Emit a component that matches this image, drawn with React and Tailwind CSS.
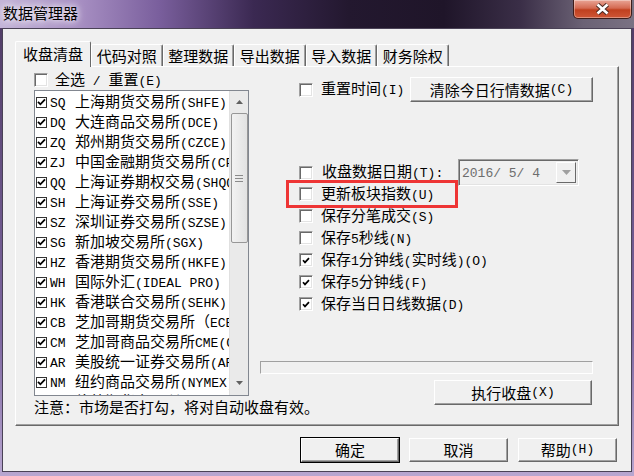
import React from 'react';

const ASCII = /([\x20-\x7e]+)/;

// SimSun-like mixing: half-width ascii in a mono face, CJK in Noto
function T({ s }) {
  return s.split(ASCII).map((p, i) =>
    i % 2 === 1 ? (
      <span key={i} className="font-['Liberation_Mono',monospace] text-[13px] whitespace-pre">{p}</span>
    ) : (
      p
    )
  );
}

function Check({ on }) {
  return (
    <span className="w-[14px] h-[14px] shrink-0 bg-white border border-t-[#a0a0a0] border-l-[#a0a0a0] border-r-white border-b-white shadow-[inset_1px_1px_0_#696969,inset_-1px_-1px_0_#e3e3e3] flex items-center justify-center">
      {on && (
        <svg width="8" height="7" viewBox="0 0 8 7">
          <path d="M1 3.2 L3 5.4 L7 1.2" stroke="#000" strokeWidth="1.7" fill="none" />
        </svg>
      )}
    </span>
  );
}

function Btn({ children, className = '' }) {
  return (
    <div className={`flex items-center justify-center bg-[#f0f0f0] border border-t-white border-l-white border-r-[#696969] border-b-[#696969] shadow-[inset_-1px_-1px_0_#a0a0a0] leading-[20px] ${className}`}>
      {children}
    </div>
  );
}

const markets = [
  ['SQ', '上海期货交易所(SHFE)'],
  ['DQ', '大连商品交易所(DCE)'],
  ['ZQ', '郑州期货交易所(CZCE)'],
  ['ZJ', '中国金融期货交易所(CFFEX)'],
  ['QQ', '上海证券期权交易(SHQQ)'],
  ['SH', '上海证券交易所(SSE)'],
  ['SZ', '深圳证券交易所(SZSE)'],
  ['SG', '新加坡交易所(SGX)'],
  ['HZ', '香港期货交易所(HKFE)'],
  ['WH', '国际外汇(IDEAL PRO)'],
  ['HK', '香港联合交易所(SEHK)'],
  ['CB', '芝加哥期货交易所（ECBOT)'],
  ['CM', '芝加哥商品交易所CME(GLOBEX)'],
  ['AR', '美股统一证券交易所(ARCA)'],
  ['NM', '纽约商品交易所(NYMEX)'],
  ['LE', '伦敦期货交易所(LIFFE)'],
];

const tabs = ['代码对照', '整理数据', '导出数据', '导入数据', '财务除权'];

const options = [
  ['更新板块指数(U)', false],
  ['保存分笔成交(S)', false],
  ['保存5秒线(N)', false],
  ['保存1分钟线(实时线)(O)', true],
  ['保存5分钟线(F)', true],
  ['保存当日日线数据(D)', true],
];

export default function App() {
  return (
    <div className="w-[634px] h-[476px] overflow-hidden flex flex-col bg-[linear-gradient(to_bottom,#4e3a63,#7d66a0_70%,#b8a6d0)] font-['Noto_Sans_CJK_SC',sans-serif] text-[15px] text-black">
      {/* title bar */}
      <div className="h-[28px] shrink-0 flex items-start justify-between bg-[linear-gradient(to_right,#c4b5d8_0%,#a991c4_12%,#7a5f9d_25%,#3b2952_40%,#23182f_55%,#1f1529_70%,#3a2e47_82%,#6b6275_92%,#7a7283_100%)]">
        <div className="pl-[3px] pt-[3px] leading-[20px] [text-shadow:0_0_6px_#fff,0_0_10px_rgba(255,255,255,0.8)]">数据管理器</div>
        <div className="mr-[2px] w-[59px] h-[19px] rounded-b-[5px] border border-t-0 border-[#3d1d1a] bg-[linear-gradient(to_bottom,#e9a596,#d46a52_45%,#c0401f_55%,#cf5636)] shadow-[inset_0_0_0_1px_rgba(255,255,255,0.35)] flex items-center justify-center">
          <svg width="15" height="12" viewBox="0 0 15 12">
            <path d="M2.5 1.5 L12.5 10.5 M12.5 1.5 L2.5 10.5" stroke="#4a2a24" strokeWidth="4.6" />
            <path d="M2.5 1.5 L12.5 10.5 M12.5 1.5 L2.5 10.5" stroke="#fff" strokeWidth="2.6" />
          </svg>
        </div>
      </div>

      <div className="flex-1 min-h-0 px-[2px] pb-[4px] flex">
        <div className="flex-1 bg-[#f0f0f0] border border-[#4a4256] flex flex-col">
          {/* tab strip */}
          <div className="ml-[12px] mt-[12px] h-[25px] flex items-end">
            <div className="relative z-10 -mb-px w-[76px] h-[26px] bg-[#f0f0f0] border-l border-t border-r border-l-white border-t-white border-r-[#696969] rounded-t-[2px] flex items-center justify-center pb-[2px] leading-[20px]">
              收盘清盘
            </div>
            {tabs.map((t) => (
              <div key={t} className="w-[71.5px] h-[22px] border-l border-t border-r border-l-white border-t-white border-r-[#696969] rounded-t-[2px] shadow-[inset_-1px_0_0_#a0a0a0] flex items-center justify-center leading-[20px]">
                {t}
              </div>
            ))}
          </div>

          {/* tab panel */}
          <div className="ml-[12px] w-[604px] h-[360px] border border-t-white border-l-white border-r-[#696969] border-b-[#696969] shadow-[inset_-1px_-1px_0_#a0a0a0] flex">
            {/* left column */}
            <div className="ml-[18px] w-[215px] pt-[6px] flex flex-col">
              <div className="h-[14px] flex items-center gap-[7px] leading-[20px] whitespace-nowrap">
                <Check />
                <span><T s="全选 / 重置(E)" /></span>
              </div>
              <div className="mt-[3px] h-[306px] border border-[#828790] bg-white flex">
                <div className="flex-1 min-w-0 overflow-hidden pt-[1px]">
                  {markets.map(([c, n]) => (
                    <div key={c} className="h-[20px] flex items-center whitespace-nowrap leading-[20px]">
                      <span className="ml-px w-[11px] h-[11px] shrink-0 border border-[#333] bg-white flex items-center justify-center">
                        <svg width="9" height="8" viewBox="0 0 9 8">
                          <path d="M1 3.8 L3.4 6.3 L8 1.3" stroke="#000" strokeWidth="1.8" fill="none" />
                        </svg>
                      </span>
                      <span className="ml-[3px] w-[25px] shrink-0"><T s={c} /></span>
                      <span><T s={n} /></span>
                    </div>
                  ))}
                </div>
                {/* scrollbar */}
                <div className="w-[19px] shrink-0 bg-[#eaeaea] border-l border-[#e0e0e0] flex flex-col items-center">
                  <div className="h-[22px] flex items-center justify-center">
                    <svg width="7" height="4" viewBox="0 0 7 4"><path d="M0 4 L3.5 0 L7 4 Z" fill="#606060" /></svg>
                  </div>
                  <div className="w-[17px] h-[130px] rounded-[2px] border border-[#979797] bg-[linear-gradient(to_right,#f2f2f2,#e2e2e2)] flex flex-col items-center justify-center gap-[2px]">
                    <span className="w-[8px] h-px bg-[#8a8a8a]" />
                    <span className="w-[8px] h-px bg-[#8a8a8a]" />
                    <span className="w-[8px] h-px bg-[#8a8a8a]" />
                  </div>
                  <div className="flex-1" />
                  <div className="h-[24px] flex items-center justify-center">
                    <svg width="7" height="4" viewBox="0 0 7 4"><path d="M0 0 L3.5 4 L7 0 Z" fill="#606060" /></svg>
                  </div>
                </div>
              </div>
              <div className="mt-px leading-[20px] whitespace-nowrap">注意：市场是否打勾，将对自动收盘有效。</div>
            </div>

            {/* right column */}
            <div className="relative ml-[11px] w-[358px] flex flex-col">
              <div className="mt-[10px] h-[25px] flex items-center pl-[39px] leading-[20px]">
                <Check />
                <span className="ml-[8px]"><T s="重置时间(I)" /></span>
                <Btn className="ml-auto mr-[25px] w-[183px] h-[25px]"><T s="清除今日行情数据(C)" /></Btn>
              </div>

              <div className="mt-[57px] h-[27px] flex items-center pl-[39px] leading-[20px]">
                <Check />
                <span className="ml-[9px] whitespace-nowrap"><T s="收盘数据日期(T):" /></span>
                <div className="ml-auto mr-[39px] w-[121px] h-[27px] bg-[#f0f0f0] border border-t-[#a0a0a0] border-l-[#a0a0a0] border-r-white border-b-white shadow-[inset_1px_1px_0_#696969,inset_-1px_-1px_0_#e3e3e3] flex items-center">
                  <span className="ml-[3px] text-[#6d6d6d]"><T s="2016/ 5/ 4" /></span>
                  <div className="ml-auto mr-[2px] w-[20px] h-[21px] bg-[#f0f0f0] border border-t-white border-l-white border-r-[#696969] border-b-[#696969] flex items-center justify-center">
                    <svg width="9" height="5" viewBox="0 0 9 5"><path d="M0 0 L4.5 5 L9 0 Z" fill="#a0a0a0" /></svg>
                  </div>
                </div>
              </div>

              <div className="-mt-[3px] flex flex-col">
                {options.map(([label, on]) => (
                  <div key={label} className="h-[22px] flex items-center pl-[39px] leading-[20px] whitespace-nowrap">
                    <Check on={on} />
                    <span className="ml-[8px]"><T s={label} /></span>
                  </div>
                ))}
              </div>

              <div className="mt-[46px] w-[333px] h-[13px] bg-[#f0f0f0] border border-t-[#a0a0a0] border-l-[#a0a0a0] border-r-white border-b-white" />

              <Btn className="mt-[6px] ml-[174px] w-[158px] h-[25px]"><T s="执行收盘(X)" /></Btn>

              {/* red annotation box */}
              <div className="absolute left-[26px] top-[113px] w-[172px] h-[28px] border-[3px] border-[#ee3535]" />
            </div>
          </div>

          {/* dialog buttons */}
          <div className="mt-[12px] pr-[14px] flex justify-end gap-[10px]">
            <Btn className="w-[98px] h-[24px] outline outline-1 outline-black">确定</Btn>
            <Btn className="w-[99px] h-[24px]">取消</Btn>
            <Btn className="w-[99px] h-[24px]"><T s="帮助(H)" /></Btn>
          </div>
        </div>
      </div>
    </div>
  );
}
